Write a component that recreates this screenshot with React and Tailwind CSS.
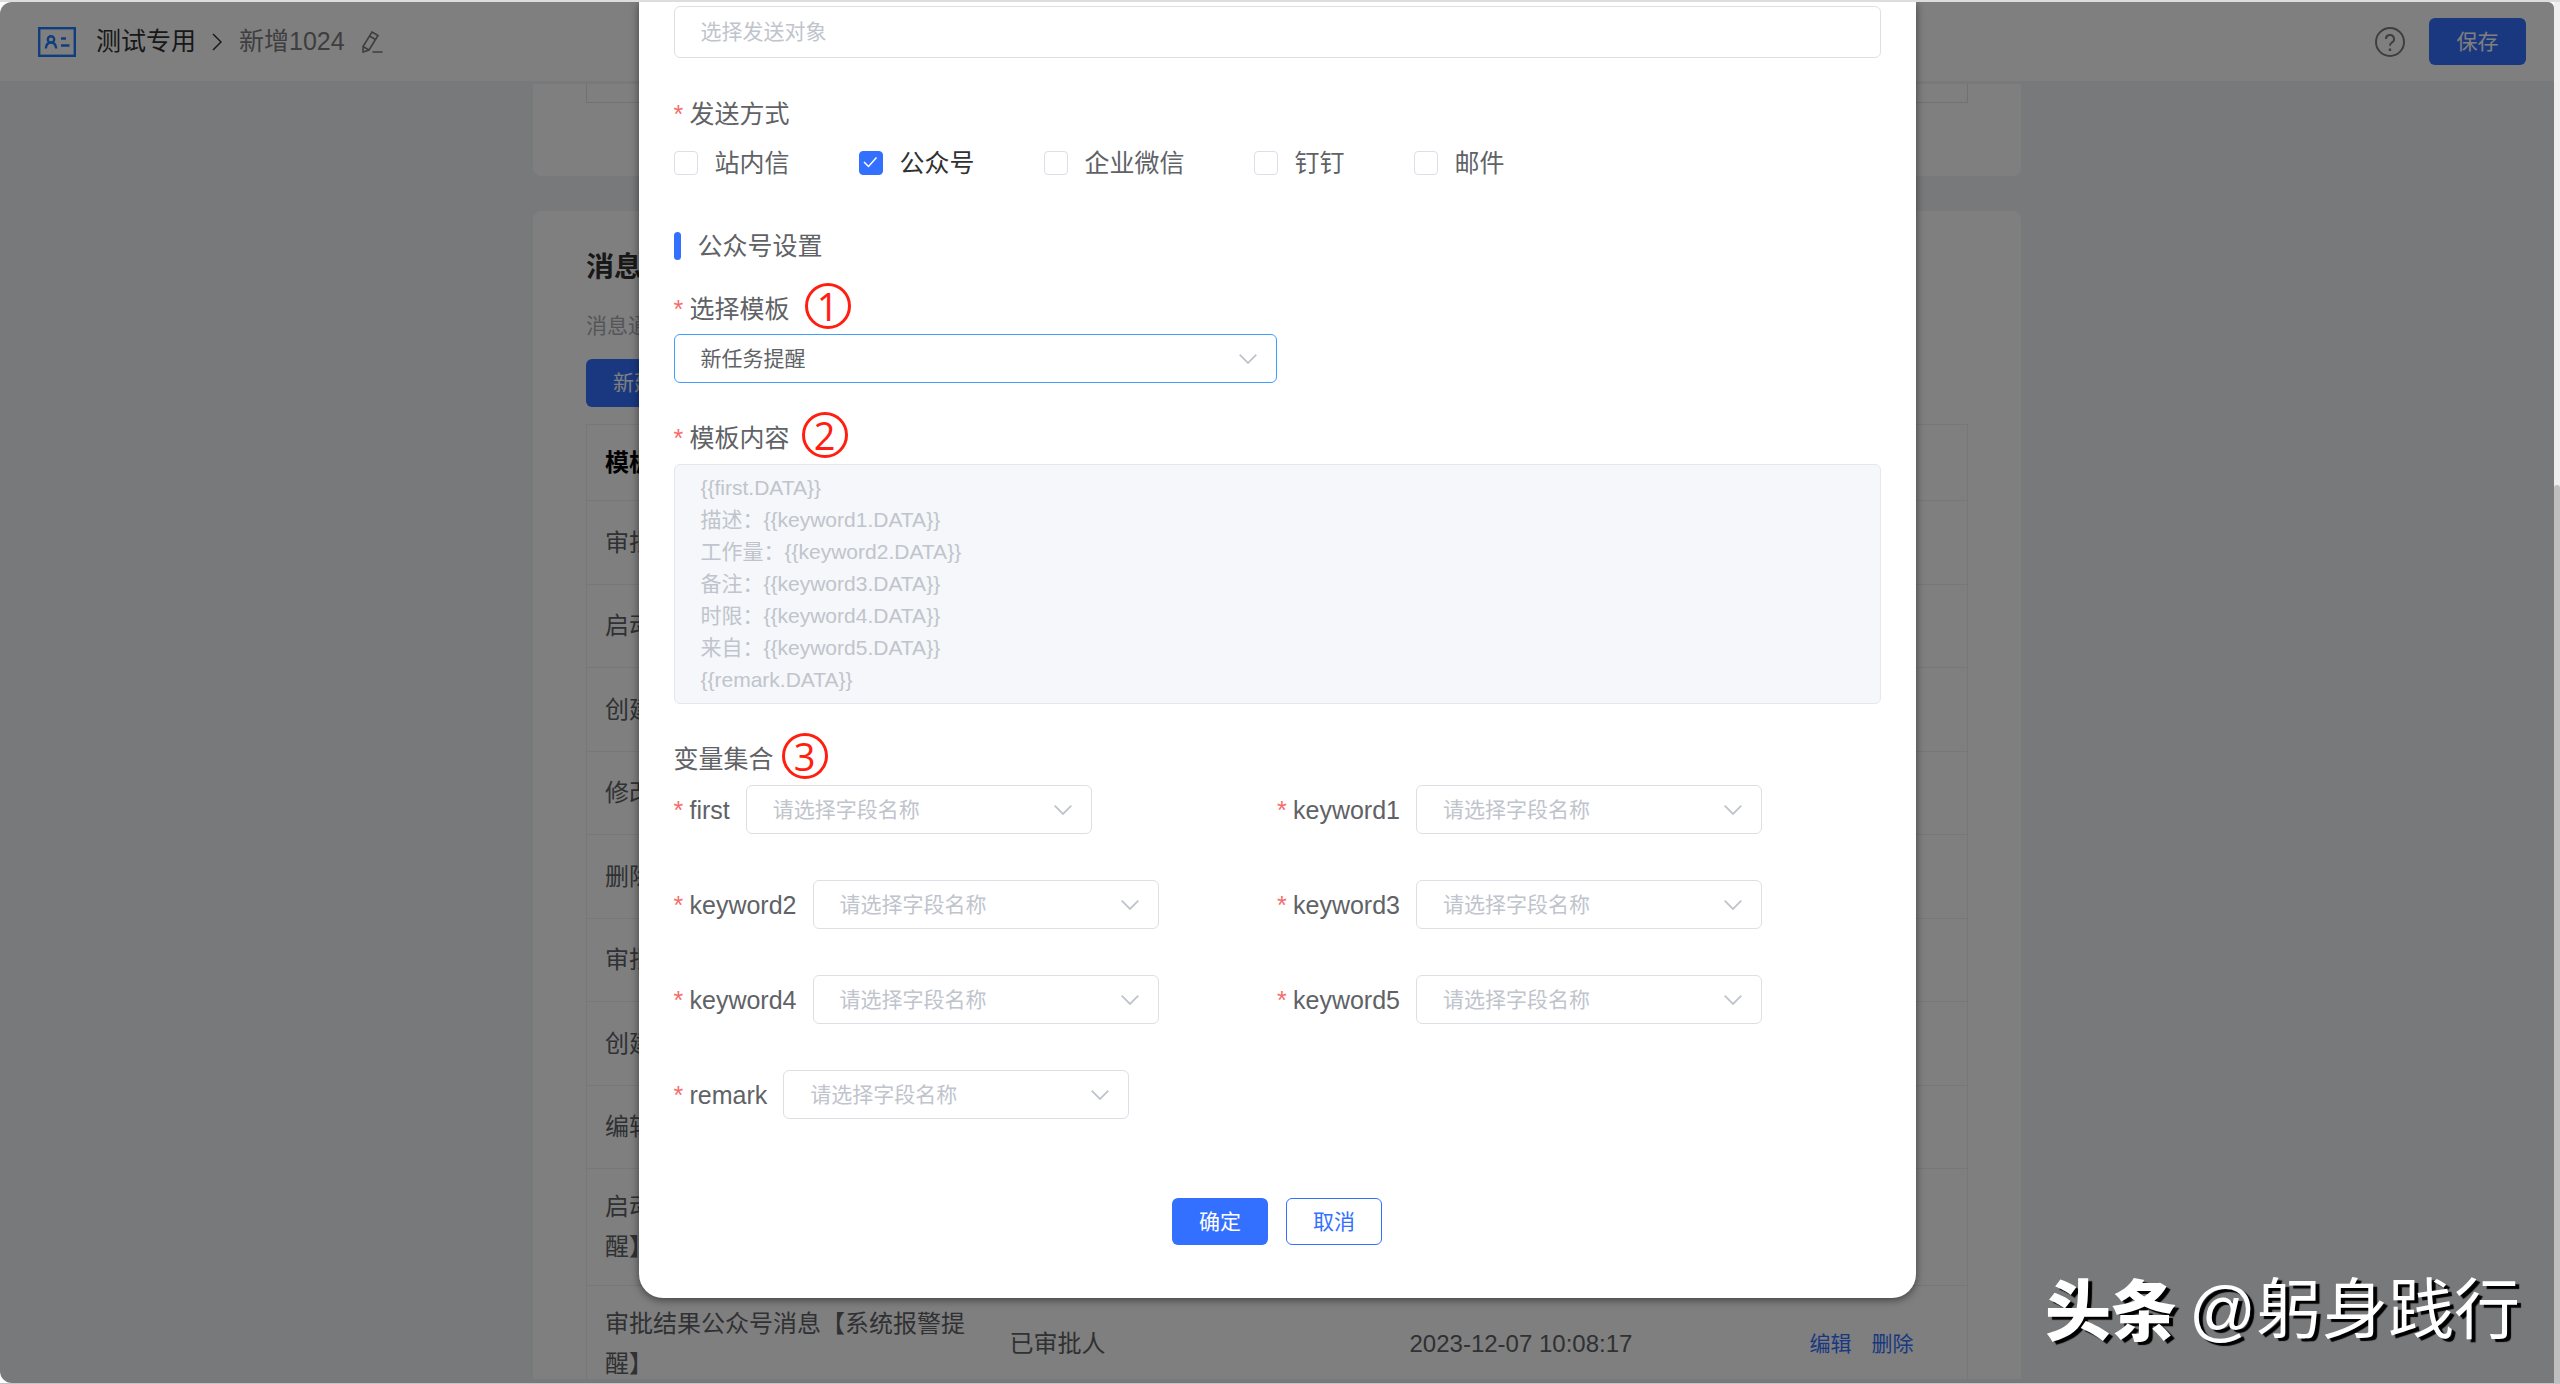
import { useState } from 'react';

const rows = [
  { name: '审批结果站内消息', target: '已审批人', time: '2023-12-07 10:02:11' },
  { name: '启动流程提醒', target: '发起人', time: '2023-12-07 10:02:45' },
  { name: '创建数据提醒', target: '创建人', time: '2023-12-07 10:03:20' },
  { name: '修改数据提醒', target: '创建人', time: '2023-12-07 10:04:02' },
  { name: '删除数据提醒', target: '创建人', time: '2023-12-07 10:04:38' },
  { name: '审批任务提醒', target: '审批人', time: '2023-12-07 10:05:16' },
  { name: '创建评论提醒', target: '创建人', time: '2023-12-07 10:06:04' },
  { name: '编辑评论提醒', target: '创建人', time: '2023-12-07 10:06:51' },
  { name: '启动流程公众号消息【系统报警提醒】', target: '发起人', time: '2023-12-07 10:07:30' },
  { name: '审批结果公众号消息【系统报警提醒】', target: '已审批人', time: '2023-12-07 10:08:17' },
];

const channels = ['站内信', '公众号', '企业微信', '钉钉', '邮件'];

const variables = ['first', 'keyword1', 'keyword2', 'keyword3', 'keyword4', 'keyword5', 'remark'];

const templateContent = `{{first.DATA}}
描述：{{keyword1.DATA}}
工作量：{{keyword2.DATA}}
备注：{{keyword3.DATA}}
时限：{{keyword4.DATA}}
来自：{{keyword5.DATA}}
{{remark.DATA}}`;

function Chevron() {
  return (
    <svg
      viewBox="0 0 18 10"
      className="pointer-events-none absolute right-5 top-1/2 h-[10px] w-[18px] -translate-y-1/2"
      fill="none"
      stroke="#c0c4cc"
      strokeWidth="1.8"
    >
      <path d="M0.7 0.7 9 9 17.3 0.7" />
    </svg>
  );
}

function Step({ n }) {
  return (
    <span className="flex h-[46px] w-[46px] items-center justify-center rounded-full border-3 border-[#ff1e10] font-['Open_Sans',sans-serif] text-[38px] leading-none text-[#ff1e10]">
      {n}
    </span>
  );
}

function Required() {
  return <span className="mr-[6px] w-[10px] text-[#f56c6c]">*</span>;
}

function Header() {
  return (
    <header className="flex h-[79px] flex-shrink-0 items-center justify-between bg-white pl-[38px] pr-7 text-[25px]">
      <div className="flex items-center">
        <svg viewBox="0 0 38 30" className="mr-5 h-[30px] w-[38px]" fill="none" stroke="#1f7cff" strokeWidth="2.4">
          <rect x="1.2" y="1.2" width="35.6" height="27.6" />
          <circle cx="13" cy="12.4" r="3.2" />
          <path d="M7.8 21.5c.4-4 2.4-6 5.2-6s4.8 2 5.2 6" />
          <path d="M23 11.5h5M23 18.5h8.5" />
        </svg>
        <a href="#app" className="text-[#303133]">测试专用</a>
        <svg viewBox="0 0 10 18" className="ml-4 mr-[17px] h-[18px] w-[10px]" fill="none" stroke="#303133" strokeWidth="1.5">
          <path d="M1 1 9 9 1 17" />
        </svg>
        <span className="text-[#7d7d80]">新增1024</span>
        <button type="button" className="ml-4" aria-label="编辑名称">
          <svg viewBox="0 0 22 22" className="h-[22px] w-[22px]" fill="none" stroke="#7d7d80" strokeWidth="1.6">
            <path d="M11 1 17 4.5 8 19 2 21 2 15.5Z M8.5 5 14.5 8.5 M2 15.5 8 19 M11.5 21H21.5" />
          </svg>
        </button>
      </div>
      <div className="flex items-center">
        <button type="button" className="mr-6" aria-label="帮助">
          <svg viewBox="0 0 30 30" className="h-[30px] w-[30px]" fill="none" stroke="#7d7d80" strokeWidth="2">
            <circle cx="15" cy="15" r="14" />
            <path d="M11 12a4 4 0 1 1 5.8 3.5c-1.3.8-1.8 1.5-1.8 3.2" />
            <path d="M15 21.5v2.4" strokeWidth="2.4" />
          </svg>
        </button>
        <button type="button" className="h-[47px] w-[97px] rounded-md bg-[#3370ff] text-[21px] text-white">
          保存
        </button>
      </div>
    </header>
  );
}

function MessageTable() {
  return (
    <table className="w-full table-fixed border-collapse border border-[#ebeef5] text-left text-2xl text-[#606266]">
      <thead>
        <tr className="h-[76px] text-black">
          <th className="w-[405px] px-[18px] font-bold">模板名称</th>
          <th className="w-[400px] px-[18px] font-bold">发送对象</th>
          <th className="w-[400px] px-[18px] font-bold">创建时间</th>
          <th className="px-[18px] font-bold">操作</th>
        </tr>
      </thead>
      <tbody>
        {rows.map((row) => (
          <tr
            key={row.time}
            className={`border-t border-[#ebeef5] ${row.name.length > 15 ? 'h-[117px]' : 'odd:h-[84px] even:h-[83px]'}`}
          >
            <td className="px-[18px] leading-10">{row.name}</td>
            <td className="px-[18px]">{row.target}</td>
            <td className="px-[18px]">{row.time}</td>
            <td className="px-[18px] text-[21px] text-[#3370ff]">
              <a href="#edit" className="mr-5">编辑</a>
              <a href="#delete">删除</a>
            </td>
          </tr>
        ))}
      </tbody>
    </table>
  );
}

function MessageDialog() {
  const [checked, setChecked] = useState(['公众号']);

  const toggle = (name) => {
    setChecked((list) => (list.includes(name) ? list.filter((c) => c !== name) : [...list, name]));
  };

  return (
    <div
      role="dialog"
      aria-label="消息设置"
      className="mx-auto w-1/2 rounded-b-3xl bg-white px-[35px] pb-[53px] pt-1 text-[25px] leading-9 text-[#606266] shadow-[0_2px_8px_rgba(0,0,0,0.5)]"
    >
      <input
        type="text"
        aria-label="发送对象"
        placeholder="选择发送对象"
        className="block h-[52px] w-full rounded-md border border-[#dcdfe6] px-[26px] text-[21px] placeholder:text-[#c0c4cc]"
      />

      <fieldset className="mt-[38px]">
        <legend className="flex">
          <Required />发送方式
        </legend>
        <div className="mt-[13px] flex gap-[69px]">
          {channels.map((name) => (
            <label key={name} className="flex items-center">
              <span className="relative mr-[17px] flex">
                <input
                  type="checkbox"
                  checked={checked.includes(name)}
                  onChange={() => toggle(name)}
                  className="peer h-6 w-6 appearance-none rounded-sm border border-[#dcdfe6] checked:border-[#3370ff] checked:bg-[#3370ff]"
                />
                <svg
                  viewBox="0 0 24 24"
                  className="pointer-events-none absolute inset-0 hidden h-6 w-6 peer-checked:block"
                  fill="none"
                  stroke="#fff"
                  strokeWidth="1.5"
                >
                  <path d="M5 11 9.5 15.5 17.5 6.5" />
                </svg>
              </span>
              <span className={checked.includes(name) ? 'text-[#303133]' : ''}>{name}</span>
            </label>
          ))}
        </div>
      </fieldset>

      <h3 className="mt-[47px] flex items-center">
        <span className="mr-[17px] h-7 w-[7px] rounded-full bg-[#3370ff]" />
        公众号设置
      </h3>

      <div className="mt-[19px] flex h-[46px] items-end leading-10">
        <label htmlFor="template" className="mr-[15px] flex">
          <Required />选择模板
        </label>
        <Step n={1} />
      </div>
      <div className="relative mt-[5px] w-1/2">
        <select
          id="template"
          className="block h-[49px] w-full appearance-none rounded-md border border-[#409eff] bg-white px-[26px] text-[21px]"
        >
          <option>新任务提醒</option>
        </select>
        <Chevron />
      </div>

      <div className="mt-[29px] flex h-[46px] items-end leading-10">
        <label htmlFor="content" className="mr-3 flex">
          <Required />模板内容
        </label>
        <Step n={2} />
      </div>
      <textarea
        id="content"
        disabled
        rows={7}
        value={templateContent}
        className="mt-[6px] block w-full resize-none overflow-hidden rounded-md border border-[#e4e7ed] bg-[#f5f7fa] px-[26px] py-[7px] text-[21px] leading-8 text-[#c0c4cc]"
      />

      <div className="mt-[29px] flex h-[46px] items-end leading-10">
        <span className="mr-2">变量集合</span>
        <Step n={3} />
      </div>
      <div className="mt-[6px] grid grid-cols-2 gap-y-[46px]">
        {variables.map((name) => (
          <div key={name} className="flex items-center">
            <label htmlFor={name} className="mr-4 flex">
              <Required />{name}
            </label>
            <div className="relative w-[346px]">
              <select
                id={name}
                className="block h-[49px] w-full appearance-none rounded-md border border-[#dcdfe6] bg-white px-[26px] text-[21px] text-[#c0c4cc]"
              >
                <option>请选择字段名称</option>
              </select>
              <Chevron />
            </div>
          </div>
        ))}
      </div>

      <div className="mt-[79px] flex justify-center gap-[18px] text-[21px]">
        <button type="button" className="h-[47px] w-24 rounded-md bg-[#3370ff] text-white">确定</button>
        <button type="button" className="h-[47px] w-24 rounded-md border border-[#3370ff] text-[#3370ff]">取消</button>
      </div>
    </div>
  );
}

function App() {
  return (
    <div className="relative flex h-screen overflow-hidden border-b border-t-2 border-b-[#c4c4c4] border-t-[#dddddd] bg-white font-['Liberation_Sans','Noto_Sans_CJK_SC',sans-serif]">
      <div className="relative flex flex-1 flex-col overflow-hidden rounded-l-xl rounded-tr-md bg-[#f0f2f5]">
        <Header />
        <main className="mx-auto mb-1 mt-[3px] flex min-h-0 w-full max-w-[1488px] flex-1 flex-col overflow-hidden">
          <section className="mb-[35px] h-[92px] flex-shrink-0 rounded-b-lg bg-white px-[53px]">
            <div className="h-[19px] border border-t-0 border-[#e0e2ea]" />
          </section>
          <section className="flex-shrink-0 rounded-t-lg bg-white px-[53px] pt-[37px]">
            <h2 className="text-[28px] font-bold leading-10 text-[#303133]">消息通知</h2>
            <p className="mt-[22px] text-[21px] leading-8 text-[#a8abb2]">消息通知可用于提醒相关人员处理数据</p>
            <button type="button" className="mb-[17px] mt-[17px] h-12 rounded-md bg-[#3370ff] px-[27px] text-[21px] text-white">
              新建消息
            </button>
            <MessageTable />
          </section>
        </main>
        <div className="absolute inset-0 bg-black/50">
          <MessageDialog />
        </div>
      </div>
      <div className="flex w-[6px] flex-col justify-end bg-[#efefef]">
        <div className="h-[65%] rounded-t-full bg-[#bfbfbf]" />
      </div>
      <div className="absolute bottom-9 right-10 flex items-center gap-3 whitespace-nowrap text-[66px] leading-none text-white [text-shadow:4px_3px_1px_#000]">
        <span className="pb-2 font-['Noto_Sans_CJK_SC',sans-serif] font-black">头条</span>
        <span>@躬身践行</span>
      </div>
    </div>
  );
}

export default App;
